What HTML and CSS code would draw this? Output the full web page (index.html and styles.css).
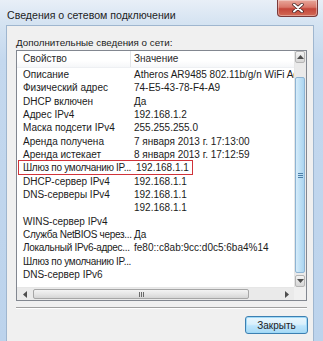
FILE: index.html
```html
<!DOCTYPE html>
<html lang="ru">
<head>
<meta charset="utf-8">
<link rel="stylesheet" href="styles.css">
</head>
<body>
<div class="window">
  <div class="titlebar">
    <span class="title">Сведения о сетевом подключении</span>
    <span class="close">
      <svg width="14" height="10" viewBox="0 0 14 10"><path d="M3 1.5 L11 8.5 M11 1.5 L3 8.5" stroke="#3a1c1c" stroke-width="3.4" stroke-linecap="round"/><path d="M3 1.5 L11 8.5 M11 1.5 L3 8.5" stroke="#ffffff" stroke-width="2" stroke-linecap="round"/></svg>
    </span>
  </div>
  <div class="client">
    <div class="label">Дополнительные сведения о сети:</div>
    <div class="listview">
      <div class="content">
        <div class="row header"><span>Свойство</span><span class="divider"></span><span>Значение</span></div>
        <div class="row"><span>Описание</span><span></span><span>Atheros AR9485 802.11b/g/n WiFi Adapter</span></div>
        <div class="row"><span>Физический адрес</span><span></span><span>74-E5-43-78-F4-A9</span></div>
        <div class="row"><span>DHCP включен</span><span></span><span>Да</span></div>
        <div class="row"><span>Адрес IPv4</span><span></span><span>192.168.1.2</span></div>
        <div class="row"><span>Маска подсети IPv4</span><span></span><span>255.255.255.0</span></div>
        <div class="row"><span>Аренда получена</span><span></span><span>7 января 2013 г. 17:13:00</span></div>
        <div class="row"><span>Аренда истекает</span><span></span><span>8 января 2013 г. 17:12:59</span></div>
        <div class="row marked"><span class="tr">Шлюз по умолчанию IP...</span><span></span><span>192.168.1.1</span><i class="mark"></i></div>
        <div class="row"><span>DHCP-сервер IPv4</span><span></span><span>192.168.1.1</span></div>
        <div class="row"><span>DNS-серверы IPv4</span><span></span><span>192.168.1.1</span></div>
        <div class="row"><span></span><span></span><span>192.168.1.1</span></div>
        <div class="row"><span>WINS-сервер IPv4</span><span></span><span></span></div>
        <div class="row"><span class="tr">Служба NetBIOS через...</span><span></span><span>Да</span></div>
        <div class="row"><span class="tr">Локальный IPv6-адрес...</span><span></span><span>fe80::c8ab:9cc:d0c5:6ba4%14</span></div>
        <div class="row"><span class="tr">Шлюз по умолчанию IP...</span><span></span><span></span></div>
        <div class="row"><span>DNS-сервер IPv6</span><span></span><span></span></div>
      </div>
      <div class="vscroll">
        <div class="sbtn"><svg width="7" height="4" viewBox="0 0 7 4"><polygon points="0,4 7,4 3.5,0" fill="#4d4d4d"/></svg></div>
        <div class="vtrack">
          <div class="vthumb"><span class="vgrip"></span></div>
        </div>
        <div class="sbtn"><svg width="7" height="4" viewBox="0 0 7 4"><polygon points="0,0 7,0 3.5,4" fill="#4d4d4d"/></svg></div>
      </div>
      <div class="hscroll">
        <div class="hbtn"><svg width="4" height="7" viewBox="0 0 4 7"><polygon points="4,0 4,7 0,3.5" fill="#4d4d4d"/></svg></div>
        <div class="htrack">
          <div class="hthumb"><span class="hgrip"></span></div>
        </div>
        <div class="hbtn"><svg width="4" height="7" viewBox="0 0 4 7"><polygon points="0,0 0,7 4,3.5" fill="#4d4d4d"/></svg></div>
      </div>
      <div class="corner"></div>
    </div>
    <div class="separator"></div>
    <div class="buttons">
      <button class="btn">Закрыть</button>
    </div>
  </div>
</div>
</body>
</html>
```
FILE: styles.css
```css
* { box-sizing: border-box; }
html, body {
  margin: 0;
  padding: 0;
  width: 323px;
  height: 341px;
  overflow: hidden;
  font-family: "Liberation Sans", Arial, sans-serif;
  color: #1b1b1b;
}
.window {
  width: 323px;
  height: 341px;
  background: linear-gradient(180deg, #e8eff7 0px, #d6e4f2 22px, #c4d8ee 60px, #bcd3ec 100%);
  display: flex;
  flex-direction: column;
  padding: 0 9px 0 6px;
}
.titlebar {
  height: 25px;
  flex: none;
  display: flex;
  align-items: center;
  justify-content: space-between;
  padding: 0 0 0 1px;
  margin-right: -4px;
}
.title {
  font-size: 10.6px;
  color: #1e1e1e;
  padding-top: 4px;
}
.close {
  align-self: flex-start;
  width: 41px;
  height: 17px;
  border: 1px solid #7a3a3a;
  border-top: none;
  border-radius: 0 0 4px 4px;
  background: linear-gradient(180deg, #e8a79b 0%, #d9776a 45%, #c4463a 55%, #d26a55 100%);
  display: flex;
  align-items: center;
  justify-content: center;
  box-shadow: inset 0 0 0 1px rgba(255,255,255,0.35);
}
.client {
  flex: 1;
  background: #f0f0f0;
  border: 1px solid #9fb6cf;
  border-bottom: none;
  padding: 0 6px 0 9px;
  display: flex;
  flex-direction: column;
}
.label {
  font-size: 9.8px;
  line-height: 13px;
  margin-top: 10px;
  height: 14px;
  color: #1b1b1b;
}
.listview {
  height: 251px;
  border: 1px solid #828790;
  background: #fff;
  display: grid;
  grid-template-columns: 1fr 12px;
  grid-template-rows: 1fr 13px;
}
.content {
  overflow: hidden;
  min-width: 0;
}
.row {
  position: relative;
  display: grid;
  grid-template-columns: 113px 0px 1fr;
  height: 13.33px;
  font-size: 10px;
  line-height: 13.33px;
  white-space: nowrap;
}
.row span {
  overflow: hidden;
  padding-left: 6px;
}
.row span.tr {
  overflow: visible;
  letter-spacing: -0.3px;
}
.row span:last-child {
  padding-left: 4px;
  overflow: visible;
}
.row.header {
  height: 17px;
  line-height: 15px;
  color: #2b2b2b;
  border-bottom: 1px solid #eef0f3;
  background: linear-gradient(180deg, #ffffff 0%, #ffffff 60%, #f6f7f9 100%);
}
.row.header .divider {
  width: 1px;
  height: 16px;
  background: #e3e5e8;
  padding: 0;
}
.mark {
  position: absolute;
  left: 1px;
  top: -1px;
  width: 175px;
  height: 15px;
  border: 1.5px solid #d0333a;
}
.vscroll {
  display: flex;
  flex-direction: column;
  background: #eaeaea;
  border-left: 1px solid #e6e6e6;
}
.sbtn {
  height: 12px;
  margin: 0 1px 0 0;
  border: 1px solid #b5b5b5;
  border-radius: 2px;
  background: linear-gradient(180deg, #f4f4f4 0%, #e4e4e4 50%, #d6d6d6 100%);
  display: flex;
  align-items: center;
  justify-content: center;
  flex: none;
}
.vtrack {
  flex: 1;
  padding: 14px 1px 2px 0;
  display: flex;
  flex-direction: column;
}
.vthumb {
  flex: 1;
  border: 1px solid #8eb4d3;
  border-radius: 2px;
  background: linear-gradient(90deg, #d6ecfa 0%, #bfe0f5 50%, #abd5f1 100%);
  display: flex;
  align-items: center;
  justify-content: center;
}
.vgrip {
  width: 5px;
  height: 5px;
  background: repeating-linear-gradient(180deg, #4c7fa8 0px, #4c7fa8 1px, transparent 1px, transparent 2px);
}
.hscroll {
  display: flex;
  background: #eaeaea;
  border-top: 1px solid #e6e6e6;
}
.hbtn {
  width: 15px;
  flex: none;
  display: flex;
  align-items: center;
  justify-content: center;
}
.htrack {
  flex: 1;
  padding: 1px 30px 1px 1px;
  display: flex;
}
.hthumb {
  flex: 1;
  border: 1px solid #a6a6a6;
  border-radius: 2px;
  background: linear-gradient(180deg, #f3f3f3 0%, #e6e6e6 50%, #d5d5d5 100%);
  display: flex;
  align-items: center;
  justify-content: center;
}
.hgrip {
  width: 5px;
  height: 5px;
  background: repeating-linear-gradient(90deg, #6a6a6a 0px, #6a6a6a 1px, transparent 1px, transparent 2px);
}
.corner {
  background: #f0f0f0;
}
.separator {
  margin-top: 6px;
  height: 2px;
  border-top: 1px solid #a0a0a0;
  border-bottom: 1px solid #ffffff;
}
.buttons {
  display: flex;
  justify-content: flex-end;
  margin-top: 7px;
  margin-right: -1px;
}
.btn {
  width: 63px;
  height: 18px;
  padding: 0;
  font-family: "Liberation Sans", Arial, sans-serif;
  font-size: 10px;
  color: #1b1b1b;
  border: 1px solid #3c7fb1;
  border-radius: 3px;
  background: linear-gradient(180deg, #eaf6fd 0%, #d9f0fc 45%, #bee6fd 55%, #a7d9f5 100%);
  box-shadow: inset 0 0 0 1px #9fd9f7;
}
```
